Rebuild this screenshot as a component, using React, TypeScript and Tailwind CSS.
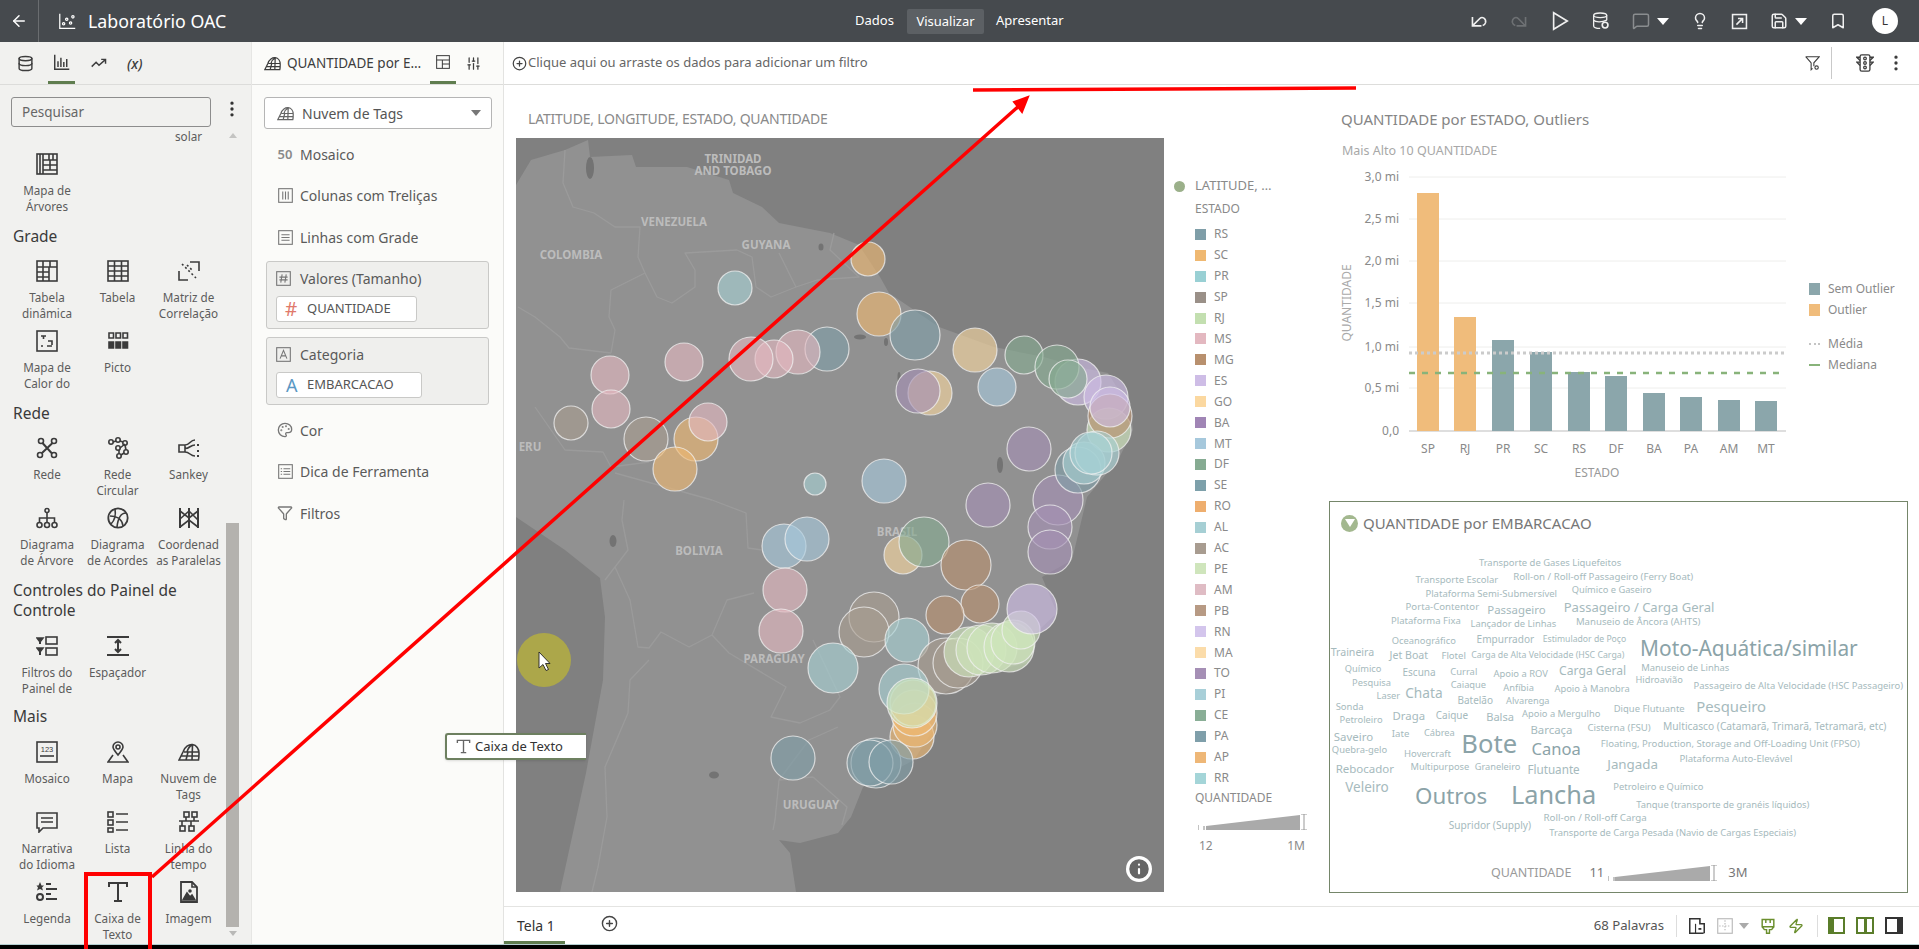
import type { ReactNode } from "react";
import { ArrowLeft, Database, Lightbulb, Bookmark, Save, EllipsisVertical, Palette, Funnel, SlidersVertical, CirclePlus, Info, MessageSquare, Zap } from "lucide-react";

const Ic = ({ s = 22, children, className = "" }: { s?: number; children: ReactNode; className?: string }) => (
  <svg width={s} height={s} viewBox="0 0 22 22" fill="none" stroke="currentColor" strokeWidth="1.6" className={`shrink-0 ${className}`}>
    {children}
  </svg>
);

const TagCloudIcon = ({ s = 22 }: { s?: number }) => (
  <Ic s={s}>
    <path d="M1 19 L5 11 C6.5 6 11 3 14.5 3.5 C18.5 4 21 8 21 12 C21 15 21 17 20.5 19 Z M6 11 H21 M3.5 15 H21 M8 19 L10 11 M14 19 L14.5 4 M9 11 C10 7 12 5 14.5 3.5" />
  </Ic>
);

const icons: Record<string, ReactNode> = {
  treemap: <Ic><rect x="1" y="1" width="20" height="20" /><path d="M7 1V21M4 1V21M7 7H21M13 1V7M17 1V7M7 12H21M14 7V17M7 17H21" /></Ic>,
  pivot: <Ic><rect x="1" y="1" width="20" height="20" /><path d="M1 7H21M7 1V21M14 1V7M1 12H13M1 17H13M13 7V21" /></Ic>,
  table: <Ic><rect x="1" y="1" width="20" height="20" /><path d="M1 6H21M1 11H21M1 16H21M7.5 1V21M14.5 1V21" /></Ic>,
  corr: <Ic><path d="M12 2H21V11M10 20H1V11" /><path d="M4 4L18 18" strokeDasharray="2 2.5" /><path d="M9 5L15 11" strokeDasharray="2 2.5" /></Ic>,
  heat: <Ic><rect x="1" y="1" width="20" height="20" /><path d="M5 6H10M7.5 6V9M12 11H16V15M5 16H7M11 16H16" /></Ic>,
  picto: <Ic><path d="M2 3H6.5V8H2ZM9 3H13.5V8H9ZM16 3H20.5V8H16Z" /><path d="M2 12H6.5V18H2ZM9 12H13.5V18H9ZM16 12H20.5V18H16Z" fill="currentColor" /></Ic>,
  network: <Ic><circle cx="5" cy="4" r="2.5" /><circle cx="18" cy="4" r="2.5" /><circle cx="4" cy="18" r="2.5" /><circle cx="18" cy="18" r="2.5" /><path d="M6.5 6L16 16.5M16.5 6L6 16" strokeWidth="2" /></Ic>,
  circular: <Ic><circle cx="4" cy="5" r="2.2" /><circle cx="11" cy="3" r="2.2" /><circle cx="18" cy="6" r="2.2" /><circle cx="19" cy="15" r="2.2" /><circle cx="12" cy="19" r="2.2" /><circle cx="11" cy="11" r="2.2" /><path d="M6 5L9 4M13 4L16 5M18 8L19 13M17 16L14 18M12 13V17M13 11L18 7" /></Ic>,
  sankey: <Ic><path d="M1 8H7V15H1ZM7 8C12 8 12 3 17 3M7 11.5C12 11.5 12 8 17 8M7 15C12 15 12 19 17 19" /><path d="M20 7V9M20 13V15M20 18V20" strokeWidth="2" /></Ic>,
  tree: <Ic><circle cx="11" cy="3.5" r="2" /><circle cx="3.5" cy="18" r="2.5" /><circle cx="11" cy="18" r="2.5" /><circle cx="18.5" cy="18" r="2.5" /><path d="M11 6V15M3.5 15V11H18.5V15" /></Ic>,
  chord: <Ic s={22}><circle cx="11" cy="11" r="9.7" strokeWidth="1.8" /><path d="M4 17C8 13 9 8 8 2M3 9C8 9 15 11 16 19M19 6C14 6 11 11 10 20" /></Ic>,
  parallel: <Ic><path d="M2 1V21M11 1V21M20 1V21" strokeWidth="2" /><path d="M2 4L11 11L20 4M2 12L11 4L20 13M2 20L11 13L20 20" /></Ic>,
  filters: <Ic><path d="M1 3H7L4 7Z M1 13H7L4 17Z" fill="currentColor" /><path d="M4 6V9M4 16V20" strokeWidth="2" /><rect x="10" y="2" width="11" height="7" /><rect x="10" y="13" width="11" height="7" /></Ic>,
  spacer: <Ic><path d="M0 2H22M0 20H22" strokeWidth="1.8" /><path d="M11 5V17M8 8L11 5L14 8M8 14L11 17L14 14" strokeWidth="2" /></Ic>,
  tile: <Ic><rect x="1" y="1" width="20" height="20" /><text x="11" y="11" textAnchor="middle" fontSize="7.5" fontFamily="Liberation Sans" fill="currentColor" stroke="none">123</text><path d="M4 15H18" /></Ic>,
  pin: <Ic><path d="M11 14C8 10 6 8 6 6A5 5 0 0 1 16 6C16 8 14 10 11 14Z" /><circle cx="11" cy="6" r="2" /><path d="M6 14L1 21H21L16 14" /></Ic>,
  narrative: <Ic><path d="M1 2H21V17H7L3 21V17H1Z" /><path d="M5 7H17M5 11H17" /></Ic>,
  list: <Ic><rect x="1" y="1" width="5" height="5" /><rect x="1" y="9" width="5" height="5" /><rect x="1" y="17" width="5" height="4" /><path d="M9 3H21M9 11H21M9 19H21" /></Ic>,
  timeline: <Ic><rect x="6" y="1" width="5" height="5" /><rect x="14" y="1" width="5" height="5" /><rect x="2" y="15" width="5" height="5" /><rect x="11" y="15" width="5" height="5" /><path d="M1 10H21M8 6V10M16 6V10M4 10V15M13 10V15" /></Ic>,
  legend: <Ic><path d="M4 1L5.5 4.5H8L6 6.5L7 9.5L4 8L1 9.5L2 6.5L0.5 4.5H2.5Z" fill="currentColor" stroke="none" /><circle cx="4" cy="16" r="3" strokeWidth="2" /><path d="M10 3H15M10 8H21M10 13H15M10 18H21" strokeWidth="2" /></Ic>,
  text: <Ic><path d="M2 6V2H20V6M11 2V20M7 20H15" strokeWidth="2" /></Ic>,
  image: <Ic><path d="M3 1H14L19 6V21H3Z" strokeWidth="1.8" /><path d="M14 1V6H19" /><path d="M5 19L9 12L12 16L14 14L17 19Z" fill="currentColor" /><circle cx="12" cy="10" r="1" fill="currentColor" /></Ic>,
};

const Tool = ({ icon, label }: { icon: ReactNode; label: string }) => (
  <div className="flex flex-col items-center text-[#5c5c5c] text-[11.7px] leading-[15.5px] text-center">
    <div className="h-[29px] text-[#3b3b3b]">{icon}</div>
    <span className="mt-[1px] whitespace-pre-line">{label}</span>
  </div>
);

const Group = ({ children }: { children: ReactNode }) => (
  <div className="grid grid-cols-[70px_71px_71px] auto-rows-[70px] ml-[12px] w-[212px]">{children}</div>
);

const Heading = ({ children, cls }: { children: ReactNode; cls: string }) => (
  <div className={`ml-[13px] text-[15.5px] leading-[20px] text-[#3a3a3a] ${cls}`}>{children}</div>
);

function LeftPanel() {
  return (
    <aside className="w-[252px] shrink-0 bg-[#f1f1ef] flex flex-col border-r border-[#e6e6e4]">
      <div className="h-[43px] border-b border-[#dcdcda] flex relative text-[#3d3d3d]">
        <div className="w-[48px] flex items-center justify-center pl-[2px]"><Database size={17} /></div>
        <div className="w-[27px] flex items-center justify-center border-b-[3px] border-[#5f7d4f]">
          <Ic s={16}><path d="M1 1V21H21M5.5 18V10M9.5 18V5M13.5 18V11M17.5 18V7" strokeWidth="2" /></Ic>
        </div>
        <div className="ml-[16px] flex items-center"><Ic s={16}><path d="M1 16L7 10L11 14L19 7M14 6H20V12" strokeWidth="2" /></Ic></div>
        <div className="ml-[20px] flex items-center italic text-[14px] font-medium">(x)</div>
      </div>
      <div className="h-[42px] pt-[12px] pl-[11px] flex">
        <div className="w-[200px] h-[30px] border border-[#8d8d8d] rounded-[3px] pl-[10px] text-[13.5px] leading-[28px] text-[#666]">Pesquisar</div>
        <EllipsisVertical size={20} className="ml-[11px] mt-[2px] text-[#333]" />
      </div>
      <div className="flex-1 flex overflow-hidden">
        <div className="w-[226px] shrink-0">
          <div className="h-[26px] w-[212px] pl-[175px] pt-[1px] text-[11.7px] text-[#5c5c5c]">solar</div>
          <Group><Tool icon={icons.treemap} label={"Mapa de\nÁrvores"} /></Group>
          <Heading cls="pt-[3px] h-[37px]">Grade</Heading>
          <Group>
            <Tool icon={icons.pivot} label={"Tabela\ndinâmica"} />
            <Tool icon={icons.table} label="Tabela" />
            <Tool icon={icons.corr} label={"Matriz de\nCorrelação"} />
            <Tool icon={icons.heat} label={"Mapa de\nCalor do"} />
            <Tool icon={icons.picto} label="Picto" />
          </Group>
          <Heading cls="pt-[3px] h-[37px]">Rede</Heading>
          <Group>
            <Tool icon={icons.network} label="Rede" />
            <Tool icon={icons.circular} label={"Rede\nCircular"} />
            <Tool icon={icons.sankey} label="Sankey" />
            <Tool icon={icons.tree} label={"Diagrama\nde Árvore"} />
            <Tool icon={icons.chord} label={"Diagrama\nde Acordes"} />
            <Tool icon={icons.parallel} label={"Coordenad\nas Paralelas"} />
          </Group>
          <Heading cls="pt-[3px] h-[58px]">Controles do Painel de Controle</Heading>
          <Group>
            <Tool icon={icons.filters} label={"Filtros do\nPainel de"} />
            <Tool icon={icons.spacer} label="Espaçador" />
          </Group>
          <Heading cls="pt-[1px] h-[36px]">Mais</Heading>
          <Group>
            <Tool icon={icons.tile} label="Mosaico" />
            <Tool icon={icons.pin} label="Mapa" />
            <Tool icon={<TagCloudIcon />} label={"Nuvem de\nTags"} />
            <Tool icon={icons.narrative} label={"Narrativa\ndo Idioma"} />
            <Tool icon={icons.list} label="Lista" />
            <Tool icon={icons.timeline} label={"Linha do\ntempo"} />
            <Tool icon={icons.legend} label="Legenda" />
            <Tool icon={icons.text} label={"Caixa de\nTexto"} />
            <Tool icon={icons.image} label="Imagem" />
          </Group>
        </div>
        <div className="w-[13px] flex flex-col items-center">
          <div className="mt-[6px] h-0 w-0 border-x-[4px] border-x-transparent border-b-[5px] border-b-[#c4c4c2]" />
          <div className="mt-[385px] w-[13px] h-[404px] bg-[#b4b2ae]" />
          <div className="mt-[4px] h-0 w-0 border-x-[4px] border-x-transparent border-t-[5px] border-t-[#b9b9b7]" />
        </div>
      </div>
    </aside>
  );
}

const PropRow = ({ icon, label, cls }: { icon: ReactNode; label: string; cls: string }) => (
  <div className={`flex items-center pl-[22px] text-[14px] text-[#5a5a5a] h-[24px] ${cls}`}>
    <div className="w-[22px] text-[#777] flex justify-center">{icon}</div>
    <span className="ml-[4px]">{label}</span>
  </div>
);

function PropPanel() {
  return (
    <aside className="w-[252px] shrink-0 bg-[#fbfbf9] border-r border-[#e3e3e1] flex flex-col">
      <div className="h-[43px] border-b border-[#dcdcda] flex items-center pl-[12px] text-[#3d3d3d] text-[13.5px]">
        <TagCloudIcon s={17} />
        <span className="ml-[6px] w-[140px]">QUANTIDADE por E…</span>
        <div className="self-stretch w-[26px] ml-[3px] flex items-center justify-center border-b-[3px] border-[#5f7d4f]">
          <Ic s={14}><rect x="1" y="1" width="20" height="20" /><path d="M1 8H21M10 8V21M10 14H21" /></Ic>
        </div>
        <SlidersVertical size={15} className="ml-[10px]" />
      </div>
      <div className="mt-[12px] ml-[12px] w-[228px] h-[32px] bg-white border border-[#b5b5b5] rounded-[3px] flex items-center pl-[12px] text-[14px] text-[#555]">
        <span className="text-[#666]"><TagCloudIcon s={17} /></span>
        <span className="ml-[8px]">Nuvem de Tags</span>
        <div className="ml-auto mr-[10px] h-0 w-0 border-x-[5px] border-x-transparent border-t-[6px] border-t-[#777]" />
      </div>
      <PropRow cls="mt-[13px]" label="Mosaico" icon={<span className="text-[13px] font-semibold leading-none text-[#8a8a8a]">50</span>} />
      <PropRow cls="mt-[17px]" label="Colunas com Treliças" icon={<Ic s={15}><rect x="1" y="1" width="20" height="20" /><path d="M7 5V17M11 5V17M15 5V17" /></Ic>} />
      <PropRow cls="mt-[18px]" label="Linhas com Grade" icon={<Ic s={15}><rect x="1" y="1" width="20" height="20" /><path d="M5 7H17M5 11H17M5 15H17" /></Ic>} />
      <div className="mt-[12px] mx-[14px] h-[68px] bg-[#efefed] border border-[#c9c9c7] rounded-[3px] px-[9px] pt-[6px]">
        <div className="flex items-center text-[14px] text-[#5a5a5a]">
          <span className="w-[22px] text-[#777]"><Ic s={15}><rect x="1" y="1" width="20" height="20" /><path d="M9 5L7 17M15 5L13 17M5 9H17M5 13H17" /></Ic></span>
          <span className="ml-[2px]">Valores (Tamanho)</span>
        </div>
        <div className="mt-[7px] w-[141px] h-[26px] bg-white border border-[#c9c9c7] rounded-[3px] flex items-center text-[13px] text-[#555]">
          <span className="ml-[8px] w-[22px] text-[#e0796b] text-[19px] leading-none">#</span>QUANTIDADE
        </div>
      </div>
      <div className="mt-[8px] mx-[14px] h-[68px] bg-[#efefed] border border-[#c9c9c7] rounded-[3px] px-[9px] pt-[6px]">
        <div className="flex items-center text-[14px] text-[#5a5a5a]">
          <span className="w-[22px] text-[#777]"><Ic s={15}><rect x="1" y="1" width="20" height="20" /><path d="M6 17L11 5L16 17M8 13H14" /></Ic></span>
          <span className="ml-[2px]">Categoria</span>
        </div>
        <div className="mt-[7px] w-[146px] h-[26px] bg-white border border-[#c9c9c7] rounded-[3px] flex items-center text-[13px] text-[#555]">
          <span className="ml-[9px] w-[21px] text-[#5b98c4] text-[18px] leading-none">A</span>EMBARCACAO
        </div>
      </div>
      <PropRow cls="mt-[13px]" label="Cor" icon={<Palette size={16} />} />
      <PropRow cls="mt-[17px]" label="Dica de Ferramenta" icon={<Ic s={15}><rect x="1" y="1" width="20" height="20" /><path d="M4 7H6M4 11H6M4 15H6M8 7H18M8 11H18M8 15H18" /></Ic>} />
      <PropRow cls="mt-[18px]" label="Filtros" icon={<Funnel size={16} />} />
    </aside>
  );
}

type Bubble = [number, number, number, string];
const C = { o: "#efb871", go: "#f7d6a0", t: "#a6d0d4", rs: "#7f9ea8", mt: "#a6c8dc", pk: "#e3b8c0", sp: "#a89c90", df: "#86ab92", es: "#cebde6", ba: "#a58fb5", mg: "#b8906e", rj: "#cfe5bc" };
const bubbles: Bubble[] = [
  [868, 259, 17, C.o], [735, 288, 17, C.t], [879, 314, 22, C.o], [915, 335, 25, C.rs], [975, 350, 22, C.go], [1024, 355, 19, C.df],
  [1078, 382, 23, C.es], [1057, 367, 22, C.df], [1068, 379, 19, C.df], [1106, 397, 22, C.es], [1109, 430, 22, C.rj], [1110, 416, 22, C.mg], [1110, 407, 20, C.es],
  [997, 387, 19, C.mt], [930, 393, 22, C.go], [918, 391, 22, C.ba], [827, 349, 22, C.rs], [798, 352, 22, C.pk], [774, 359, 19, C.pk], [751, 359, 22, C.pk],
  [684, 362, 19, C.pk], [610, 375, 19, C.pk], [611, 409, 19, C.pk], [571, 423, 17, C.sp], [646, 439, 22, C.sp], [696, 439, 22, C.o], [708, 422, 19, C.pk], [675, 469, 22, C.o],
  [815, 484, 11, C.t], [884, 481, 22, C.mt], [1029, 449, 22, C.ba], [988, 505, 22, C.ba], [1058, 500, 25, C.ba], [1050, 527, 22, C.ba], [1050, 552, 22, C.ba],
  [1078, 470, 23, C.rs], [1084, 463, 21, C.t], [1097, 453, 22, C.t], [1091, 453, 21, C.t],
  [784, 546, 22, C.mt], [807, 539, 22, C.mt], [785, 590, 22, C.pk], [781, 631, 22, C.pk], [903, 555, 19, C.go], [924, 542, 25, C.df], [966, 565, 25, C.mg], [980, 604, 19, C.mg], [945, 615, 19, C.mg],
  [874, 617, 25, C.sp], [864, 632, 25, C.sp], [907, 640, 22, C.t], [833, 668, 25, C.t], [946, 666, 28, C.sp], [958, 663, 25, C.sp],
  [912, 737, 22, C.o], [915, 725, 22, C.o], [914, 713, 23, C.o], [913, 703, 23, C.o], [904, 689, 25, C.t], [912, 703, 25, C.rj],
  [969, 652, 25, C.rj], [981, 650, 25, C.rj], [992, 648, 25, C.rj], [1009, 647, 25, C.rj], [1013, 642, 22, C.rj], [1021, 630, 19, C.rj], [1032, 609, 25, C.es],
  [793, 758, 22, C.rs], [876, 763, 25, C.rs], [870, 763, 23, C.rs], [891, 762, 22, C.rs],
];

const mapLabels: [string, number, number][] = [
  ["TRINIDAD", 733, 163], ["AND TOBAGO", 733, 175], ["VENEZUELA", 674, 226], ["GUYANA", 766, 249], ["COLOMBIA", 571, 259], ["ERU", 530, 451],
  ["BOLIVIA", 699, 555], ["BRASIL", 897, 536], ["PARAGUAY", 774, 663], ["URUGUAY", 811, 809],
];

function MapView() {
  return (
    <div className="relative w-[648px] h-[754px] bg-[#808080] overflow-hidden">
      <svg width="648" height="754" viewBox="516 138 648 754" className="block">
        <path fill="#919191" d="M516 185L531 160L565 150L588 140L590 157L632 155L636 167L687 167L729 180L733 193L762 207L779 223L830 233L859 245L880 277L889 293L939 327L994 347L1044 357L1078 367L1108 373L1131 410L1133 430L1118 460L1087 497L1072 560L1042 577L1057 613L1036 633L1028 663L981 673L931 700L935 727L914 760L863 787L851 817L838 833L800 843L779 840L790 853L796 892L560 892L586 773L603 680L605 617L600 578L565 550L516 517Z" />
        <g fill="none" stroke="#9b9b9b" strokeWidth="1.3" strokeLinejoin="round">
          <path d="M565 150L563 183L573 207L594 213L615 227L640 227L638 257L645 273L611 290L609 317L615 330L611 353" />
          <path d="M645 273L657 297L672 303L695 287L695 270L685 253L737 250L752 257L756 287L771 297L796 287L779 253" />
          <path d="M834 233L830 250L859 277L817 280L796 287" />
          <path d="M518 307L535 317L560 337L569 348L611 353" />
          <path d="M535 407L565 450L603 452L611 467L649 462" />
          <path d="M615 473L687 493L712 500L746 513L748 548L762 550" />
          <path d="M624 500L622 520L628 550L605 580" />
          <path d="M615 567L630 600L638 647L649 648L661 632L689 647L712 635L727 600L754 593" />
          <path d="M712 635L729 653L786 687L771 717L800 723L830 710L840 697L813 640" />
          <path d="M649 660L630 680L628 713L605 767L607 817L598 867L592 892" />
          <path d="M813 777L779 780L775 820L773 830M813 777L847 807L842 825M838 727L809 740L779 780" />
        </g>
        <g fill="#737373">
          <ellipse cx="590" cy="168" rx="4" ry="11" />
          <ellipse cx="860" cy="337" rx="6" ry="2.5" />
          <ellipse cx="886" cy="342" rx="2" ry="4" />
          <ellipse cx="821" cy="247" rx="2.5" ry="3.5" />
          <ellipse cx="899" cy="377" rx="1.5" ry="5" />
          <ellipse cx="1000" cy="465" rx="3" ry="8" />
          <ellipse cx="613" cy="541" rx="3.5" ry="6" />
          <ellipse cx="714" cy="775" rx="5" ry="3.5" />
        </g>
        {mapLabels.map(([t, x, y]) => (
          <text key={t} x={x} y={y} textAnchor="middle" fontSize="11.5" fontWeight="700" fontFamily="Noto Sans" fill="#bcbcbc">{t}</text>
        ))}
        {bubbles.map(([x, y, r, c], i) => (
          <circle key={i} cx={x} cy={y} r={r} fill={c} fillOpacity="0.62" stroke="#f2f2f2" strokeOpacity="0.75" strokeWidth="1.2" />
        ))}
        <circle cx="544" cy="660" r="27" fill="#aca74a" />
        <path d="M539 652V668L543 664.5L546 670.5L548.5 669.5L545.5 663.5H550Z" fill="#fff" stroke="#222" strokeWidth="0.9" />
      </svg>
      <div className="absolute right-[12px] bottom-[10px] w-[26px] h-[26px] rounded-full bg-white flex items-center justify-center">
        <Info size={26} className="text-white fill-[#666]" />
      </div>
    </div>
  );
}

const legendRows: [string, string][] = [
  ["RS", "#7f9ea8"], ["SC", "#efb871"], ["PR", "#99d0d4"], ["SP", "#9a9088"], ["RJ", "#c3dfb0"], ["MS", "#e3b8c0"], ["MG", "#b8906e"], ["ES", "#cebde6"], ["GO", "#fbd8a0"],
  ["BA", "#a085b5"], ["MT", "#a6c8dc"], ["DF", "#86ab92"], ["SE", "#7da0aa"], ["RO", "#eeae6e"], ["AL", "#a6cfd4"], ["AC", "#a89c90"], ["PE", "#cfe5bc"], ["AM", "#dfbcc4"],
  ["PB", "#b79a84"], ["RN", "#d3c5ec"], ["MA", "#fbdcaa"], ["TO", "#a58fb5"], ["PI", "#a8cfd8"], ["CE", "#89ae96"], ["PA", "#7f9faa"], ["AP", "#eeb777"], ["RR", "#a4d5d8"],
];

function MapLegend() {
  return (
    <div className="w-[165px] shrink-0 pl-[31px] pt-[91px] text-[#8a8a8a] text-[12px]">
      <div className="h-[20px] -ml-[21px] flex items-center text-[13px]">
        <span className="w-[11px] h-[11px] rounded-full bg-[#9bb08a]" />
        <span className="ml-[10px]">LATITUDE, …</span>
      </div>
      <div className="mt-[3px] h-[20px] leading-[20px]">ESTADO</div>
      <div className="mt-[5px]">
        {legendRows.map(([s, c]) => (
          <div key={s} className="h-[20.92px] flex items-center">
            <span className="w-[11px] h-[11px]" style={{ background: c }} />
            <span className="ml-[8px]">{s}</span>
          </div>
        ))}
      </div>
      <div className="h-[20px] leading-[20px]">QUANTIDADE</div>
      <svg width="110" height="16" viewBox="0 0 110 16" className="mt-[6px] ml-[3px] block">
        <path d="M0 11V16M6 12V16" stroke="#888" />
        <path d="M8 12L102 1V16H8Z" fill="#aaa" />
        <path d="M106 0V16M103 0H109M103 16H109" stroke="#999" fill="none" />
      </svg>
      <div className="mt-[8px] ml-[4px] w-[106px] h-[16px] flex justify-between leading-[16px]"><span>12</span><span>1M</span></div>
    </div>
  );
}

const ticks: [string, number][] = [["3,0 mi", 177], ["2,5 mi", 219], ["2,0 mi", 261], ["1,5 mi", 303], ["1,0 mi", 347], ["0,5 mi", 388], ["0,0", 431]];
const bars: [string, number, number, string][] = [
  ["SP", 1428, 193, "#f0bc7b"], ["RJ", 1465, 317, "#f0bc7b"], ["PR", 1503, 340, "#8ba6ab"], ["SC", 1541, 352, "#8ba6ab"], ["RS", 1579, 372, "#8ba6ab"],
  ["DF", 1616, 376, "#8ba6ab"], ["BA", 1654, 393, "#8ba6ab"], ["PA", 1691, 397, "#8ba6ab"], ["AM", 1729, 400, "#8ba6ab"], ["MT", 1766, 401, "#8ba6ab"],
];

function BarChart() {
  return (
    <svg width="472" height="330" viewBox="1329 160 472 330" className="block shrink-0" fontFamily="Noto Sans" fontSize="12" fill="#8a8a8a">
      {ticks.map(([t, y]) => (
        <g key={t}>
          <line x1="1409" x2="1786" y1={y} y2={y} stroke={y === 431 ? "#bdbdbd" : "#eeeeec"} />
          <text x="1399" y={y + 4} textAnchor="end">{t}</text>
        </g>
      ))}
      {bars.map(([s, x, y, c]) => (
        <g key={s}>
          <rect x={x - 11} y={y} width="22" height={431 - y} fill={c} />
          <text x={x} y="453" textAnchor="middle">{s}</text>
        </g>
      ))}
      <line x1="1409" x2="1786" y1="353" y2="353" stroke="#cbcbcb" strokeWidth="3" strokeDasharray="3 3" />
      <line x1="1409" x2="1786" y1="373" y2="373" stroke="#88b37a" strokeWidth="2.6" strokeDasharray="6 7" />
      <text x="1597" y="477" textAnchor="middle" fill="#999">ESTADO</text>
      <text x="1351" y="303" textAnchor="middle" fill="#aaa" transform="rotate(-90 1351 303)">QUANTIDADE</text>
    </svg>
  );
}

// [texto, esquerda, centro y, direita] medidos na caixa de 599px
const words: [string, number, number, number][] = [
  ["Transporte de Gases Liquefeitos", 416, 187, 789], ["Transporte Escolar", 250, 238, 467], ["Roll-on / Roll-off Passageiro (Ferry Boat)", 506, 229, 978],
  ["Plataforma Semi-Submersível", 276, 280, 621], ["Químico e Gaseiro", 659, 268, 869], ["Porta-Contentor", 224, 319, 417], ["Passageiro", 438, 326, 591],
  ["Passageiro / Carga Geral", 638, 320, 1033], ["Plataforma Fixa", 186, 361, 369], ["Lançador de Linhas", 394, 370, 619], ["Manuseio de Âncora (AHTS)", 670, 364, 996],
  ["Oceanográfico", 188, 421, 356], ["Empurrador", 410, 415, 561], ["Estimulador de Poço", 583, 413, 802], ["Moto-Aquática/similar", 838, 440, 1408], ["Traineira", 28, 453, 142],
  ["Jet Boat", 182, 463, 283], ["Flotel", 318, 465, 382], ["Carga de Alta Velocidade (HSC Carga)", 396, 461, 797], ["Químico", 65, 505, 161], ["Escuna", 216, 514, 303],
  ["Curral", 341, 514, 412], ["Apoio a ROV", 454, 520, 597], ["Carga Geral", 626, 509, 802], ["Manuseio de Linhas", 841, 502, 1072], ["Hidroavião", 826, 538, 950],
  ["Pesquisa", 84, 547, 186], ["Caiaque", 342, 553, 435], ["Anfíbia", 480, 562, 560], ["Apoio à Manobra", 614, 565, 811], ["Passageiro de Alta Velocidade (HSC Passageiro)", 978, 556, 1527],
  ["Laser", 148, 586, 210], ["Chata", 223, 577, 321], ["Batelão", 360, 598, 453], ["Alvarenga", 487, 601, 601], ["Sonda", 41, 619, 114], ["Dique Flutuante", 769, 625, 955],
  ["Pesqueiro", 985, 614, 1168], ["Petroleiro", 51, 658, 164], ["Draga", 190, 645, 275], ["Caique", 303, 643, 388], ["Balsa", 435, 648, 508], ["Apoio a Mergulho", 529, 640, 734],
  ["Barcaça", 551, 687, 661], ["Cisterna (FSU)", 700, 682, 866], ["Multicasco (Catamarã, Trimarã, Tetramarã, etc)", 898, 676, 1483], ["Saveiro", 36, 708, 139], ["Iate", 188, 700, 234],
  ["Cábrea", 272, 697, 353], ["Bote", 370, 730, 516], ["Canoa", 554, 745, 683], ["Floating, Production, Storage and Off-Loading Unit (FPSO)", 735, 730, 1414],
  ["Quebra-gelo", 31, 748, 176], ["Hovercraft", 220, 760, 343], ["Multipurpose", 237, 797, 391], ["Graneleiro", 405, 799, 525], ["Flutuante", 543, 807, 680], ["Jangada", 752, 792, 885],
  ["Plataforma Auto-Elevável", 941, 775, 1237], ["Rebocador", 41, 804, 194], ["Veleiro", 66, 862, 180], ["Outros", 249, 885, 438], ["Lancha", 500, 882, 723],
  ["Petroleiro e Químico", 768, 859, 1004], ["Tanque (transporte de granéis líquidos)", 828, 913, 1282], ["Supridor (Supply)", 337, 973, 553], ["Roll-on / Roll-off Carga", 585, 952, 856],
  ["Transporte de Carga Pesada (Navio de Cargas Especiais)", 600, 997, 1247],
];

const ctx = document.createElement("canvas").getContext("2d")!;
ctx.font = '100px "Noto Sans"';

function WordCloud() {
  return (
    <div className="relative w-[579px] h-[392px] border border-[#75866a]">
      <div className="flex items-center h-[24px] mt-[9px] ml-[11px] text-[15px] text-[#777]">
        <span className="w-[17px] h-[17px] rounded-full bg-[#a3b88f] flex items-center justify-center">
          <span className="h-0 w-0 border-x-[5px] border-x-transparent border-t-[8px] border-t-white" />
        </span>
        <span className="ml-[5px]">QUANTIDADE por EMBARCACAO</span>
      </div>
      {words.map(([t, l, y, r]) => {
        const w = (r - l) / 2.618;
        const size = (w / ctx.measureText(t).width) * 100;
        return (
          <span key={t} className="absolute whitespace-nowrap leading-none -translate-y-1/2" style={{ left: l / 2.618 - 10, top: y / 3 - 1, fontSize: size, color: size > 15 ? "#8ba3a8" : "#a6babd" }}>
            {t}
          </span>
        );
      })}
      <div className="absolute left-[161px] bottom-[9px] flex items-center text-[12.5px] text-[#9a9a9a] h-[20px]">
        <span>QUANTIDADE</span>
        <span className="ml-[18px] text-[#777] text-[13px]">11</span>
        <svg width="112" height="16" viewBox="0 0 112 16" className="ml-[4px]">
          <path d="M0 11V16M6 12V16" stroke="#888" />
          <path d="M7 12L102 1V16H7Z" fill="#aaa" />
          <path d="M106 0V16M103 0H109M103 16H109" stroke="#999" fill="none" />
        </svg>
        <span className="ml-[8px] text-[#777] text-[13px]">3M</span>
      </div>
    </div>
  );
}

function TopBar() {
  const caret = "h-0 w-0 border-x-[6px] border-x-transparent border-t-[7px] border-t-white";
  return (
    <header className="h-[42px] bg-[#464a4e] flex items-center text-white shrink-0">
      <div className="w-[39px] h-full flex items-center justify-center border-r border-[#6a6d70]"><ArrowLeft size={18} /></div>
      <div className="ml-[20px] w-[796px] flex items-center">
        <Ic s={17}><path d="M1 1V20H21" /><circle cx="6" cy="14" r="1.5" /><circle cx="10" cy="8" r="1.5" /><circle cx="15" cy="13" r="1.5" /><circle cx="18" cy="5" r="1.5" /></Ic>
        <span className="ml-[12px] text-[17.8px]">Laboratório OAC</span>
      </div>
      <span className="text-[13px] w-[52px]">Dados</span>
      <span className="text-[13px] w-[77px] h-[25px] bg-[#5c6064] leading-[25px] text-center rounded-[2px]">Visualizar</span>
      <span className="text-[13px] ml-[12px]">Apresentar</span>
      <div className="ml-auto pr-[21px] flex items-center gap-[22px] text-[#f0f0f0]">
        <Ic s={18}><path d="M3 6V17H14M3 17L12 8C15 5 20 8 19 13C18.5 15 17 16 15.5 16.5" strokeWidth="2" /></Ic>
        <Ic s={18} className="text-[#6e7174]"><path d="M19 6V17H8M19 17L10 8C7 5 2 8 3 13C3.5 15 5 16 6.5 16.5" strokeWidth="2" /></Ic>
        <Ic s={20}><path d="M4 2L19 11L4 20Z" strokeWidth="1.8" /></Ic>
        <Ic s={18}><ellipse cx="10" cy="4" rx="8" ry="2.8" /><path d="M2 4V17C2 19 6 20 10 20M18 4V10M2 10C4 12.5 12 13 18 10" /><circle cx="16" cy="16" r="3.5" strokeWidth="2" /></Ic>
        <div className="w-[37px] flex items-center justify-between">
          <MessageSquare size={18} className="text-[#8a8d8f]" />
          <span className={caret} />
        </div>
        <Lightbulb size={18} />
        <Ic s={17}><rect x="2" y="2" width="18" height="18" strokeWidth="2" /><path d="M7 15L15 7M9 7H15V13" strokeWidth="2" /></Ic>
        <div className="w-[37px] flex items-center justify-between">
          <Save size={18} />
          <span className={caret} />
        </div>
        <Bookmark size={18} />
        <div className="ml-[3px] w-[26px] h-[26px] rounded-full bg-white text-[#333] text-[12px] flex items-center justify-center">L</div>
      </div>
    </header>
  );
}

function FilterBar() {
  return (
    <div className="h-[43px] border-b border-[#dddddb] bg-white flex items-center shrink-0 text-[13px] text-[#666]">
      <CirclePlus size={15} className="ml-[8px] text-[#444]" />
      <span className="ml-[1px]">Clique aqui ou arraste os dados para adicionar um filtro</span>
      <div className="ml-auto flex items-center h-full text-[#3d3d3d]">
        <Ic s={15}><path d="M1 1H21L13 10V15M9 10V20L11 18M1 1L9 10" /><circle cx="17" cy="17" r="2.5" /></Ic>
        <div className="ml-[11px] h-[32px] w-[1px] bg-[#c9c9c9]" />
        <Ic s={18} className="ml-[24px]"><rect x="5" y="1" width="12" height="20" rx="2" /><circle cx="11" cy="5.5" r="1.6" /><circle cx="11" cy="11" r="1.6" /><circle cx="11" cy="16.5" r="1.6" /><path d="M5 4H1L5 8M17 4H21L17 8M5 10H1L5 14M17 10H21L17 14" /></Ic>
        <EllipsisVertical size={20} className="ml-[12px] mr-[13px]" />
      </div>
    </div>
  );
}

function BottomBar() {
  return (
    <footer className="h-[38px] border-t border-[#e4e4e2] bg-white flex items-center shrink-0 text-[#555]">
      <div className="w-[61px] self-stretch border-b-[3px] border-[#5f7d4f] pl-[13px] text-[14px] text-[#333] leading-[37px]">Tela 1</div>
      <CirclePlus size={17} className="ml-[36px] -mt-[4px] text-[#444]" />
      <div className="ml-auto flex items-center text-[13.2px]">
        <span>68 Palavras</span>
        <span className="ml-[12px] h-[22px] w-[1px] bg-[#ddd]" />
        <Ic s={16} className="ml-[12px] text-[#333]"><path d="M20 21H1V1H15V8H21V21" strokeWidth="2.2" /><path d="M9 8V21" /><path d="M13 15H17" strokeWidth="2.5" /></Ic>
        <Ic s={16} className="ml-[12px] text-[#bbb]"><rect x="1" y="1" width="20" height="20" /><path d="M11 3V19M3 11H19" strokeDasharray="2 2" /></Ic>
        <span className="ml-[6px] h-0 w-0 border-x-[5px] border-x-transparent border-t-[6px] border-t-[#aaa]" />
        <Ic s={16} className="ml-[11px] text-[#6b8f2e]"><path d="M3 2H19V12H3ZM8 2V7M14 2V7M3 12L6 16H9V21H13V16H16L19 12" strokeWidth="2" /></Ic>
        <Zap size={16} className="ml-[12px] text-[#6b8f2e]" />
        <span className="ml-[13px] h-[22px] w-[1px] bg-[#ddd]" />
        <div className="ml-[10px] w-[17px] h-[17px] border-2 border-[#5a7d2a] border-l-[6px]" />
        <div className="ml-[11px] w-[18px] h-[17px] border-2 border-[#5a7d2a] flex justify-center"><span className="w-[3px] bg-[#5a7d2a]" /></div>
        <div className="ml-[11px] mr-[16px] w-[18px] h-[17px] border-2 border-[#333] border-r-[6px]" />
      </div>
    </footer>
  );
}

export default function App() {
  return (
    <div className="relative w-[1919px] h-[949px] overflow-hidden bg-black font-['Noto_Sans',sans-serif] flex flex-col">
      <TopBar />
      <div className="h-[902px] flex bg-white">
        <LeftPanel />
        <PropPanel />
        <main className="flex-1 flex flex-col min-w-0">
          <FilterBar />
          <div className="flex-1 flex pl-[12px] overflow-hidden">
            <div className="w-[648px] shrink-0">
              <div className="h-[53px] pt-[23px] pl-[12px] text-[14px] leading-[22px] tracking-[-0.2px] text-[#8a8a8a]">LATITUDE, LONGITUDE, ESTADO, QUANTIDADE</div>
              <MapView />
            </div>
            <MapLegend />
            <div className="w-[579px] shrink-0">
              <div className="pl-[12px] pt-[22px] text-[15px] leading-[24px] text-[#858585]">QUANTIDADE por ESTADO, Outliers</div>
              <div className="pl-[13px] mt-[10px] h-[19px] text-[12.5px] leading-[20px] text-[#a8a8a8]">Mais Alto 10 QUANTIDADE</div>
              <div className="flex h-[341px]">
                <BarChart />
                <div className="ml-[8px] mt-[118px] text-[12px] text-[#8a8a8a]">
                  <div className="h-[21px] flex items-center"><span className="w-[11px] h-[12px] bg-[#8ba6ab]" /><span className="ml-[8px]">Sem Outlier</span></div>
                  <div className="h-[21px] flex items-center"><span className="w-[11px] h-[12px] bg-[#f0bc7b]" /><span className="ml-[8px]">Outlier</span></div>
                  <div className="mt-[13px] h-[21px] flex items-center"><span className="w-[11px] border-t-2 border-dotted border-[#c4c4c4]" /><span className="ml-[8px]">Média</span></div>
                  <div className="h-[21px] flex items-center"><span className="w-[11px] border-t-2 border-dashed border-[#88b37a]" /><span className="ml-[8px]">Mediana</span></div>
                </div>
              </div>
              <WordCloud />
            </div>
          </div>
          <BottomBar />
        </main>
      </div>
      <div className="h-[1px] bg-[#b5cfd0] shrink-0" />

      {/* ghost do arraste */}
      <div className="absolute left-[445px] top-[733px] w-[141px] h-[27px] bg-white border-2 border-[#6d8060] border-r-0 rounded-l-[3px] flex items-center pl-[9px] text-[13px] text-[#333] shadow-sm">
        <span className="text-[#666]"><Ic s={15}><path d="M2 6V2H20V6M11 2V20M7 20H15" strokeWidth="2" /></Ic></span>
        <span className="ml-[4px]">Caixa de Texto</span>
      </div>

      {/* anotacao em vermelho */}
      <svg width="1919" height="949" viewBox="0 0 1919 949" className="absolute inset-0 pointer-events-none">
        <rect x="86" y="874" width="64" height="80" fill="none" stroke="#f00" strokeWidth="4" />
        <path d="M152 877L1020 105" stroke="#f00" strokeWidth="3.5" />
        <path d="M1028 97L1014 102L1022 112Z" fill="#f00" stroke="#f00" strokeWidth="2" />
        <path d="M973 90L1356 88" stroke="#f00" strokeWidth="3.5" />
      </svg>
    </div>
  );
}
